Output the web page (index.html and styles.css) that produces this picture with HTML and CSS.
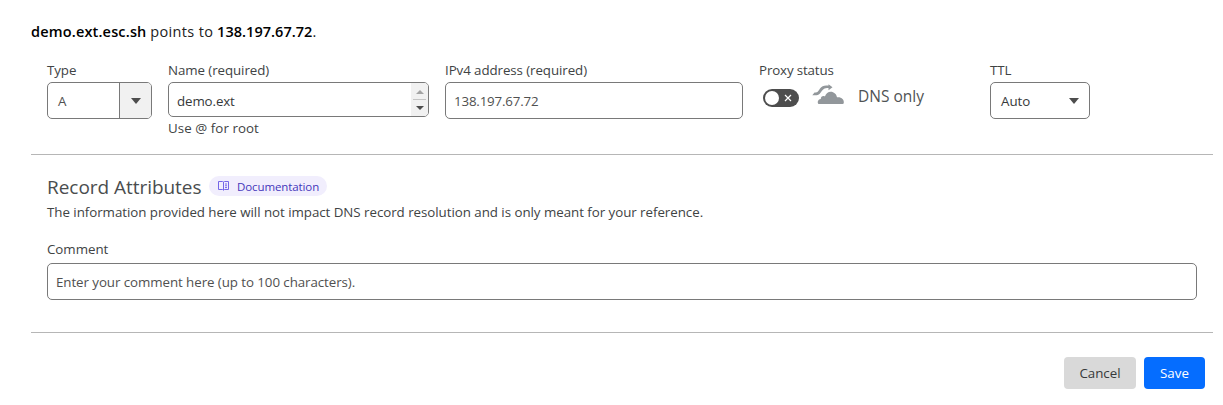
FILE: index.html
```html
<!DOCTYPE html>
<html lang="en">
<head>
<meta charset="utf-8">
<title>DNS record</title>
<link rel="stylesheet" href="styles.css">
</head>
<body>
<form class="record">
  <p class="summary"><strong class="host">demo.ext.esc.sh</strong> <span class="points">points to</span> <strong class="ip">138.197.67.72</strong>.</p>
  <div class="fields">
    <div class="field type">
      <label>Type</label>
      <div class="box combo"><span class="value">A</span><span class="toggle"><svg width="10" height="6" viewBox="0 0 10 6"><path d="M0 0h10L5 6z"/></svg></span></div>
    </div>
    <div class="field name">
      <label>Name (required)</label>
      <div class="box textarea"><span class="name-text">demo.ext</span><span class="scroll"><svg width="8" height="4" viewBox="0 0 8 4"><path class="dim" d="M0 4h8L4 0z"/></svg><i></i><svg width="8" height="4" viewBox="0 0 8 4"><path d="M0 0h8L4 4z"/></svg></span></div>
      <div class="hint">Use @ for root</div>
    </div>
    <div class="field address">
      <label>IPv4 address (required)</label>
      <div class="box"><span>138.197.67.72</span></div>
    </div>
    <div class="field proxy">
      <label>Proxy status</label>
      <div class="status">
        <span class="switch"><span class="knob"></span><svg width="8" height="8" viewBox="0 0 8 8"><path d="M1 1l6 6M7 1L1 7"/></svg></span>
        <svg class="cloud" width="33" height="21" viewBox="0 0 33 21"><path d="M6.5 20C5.2 18.8 5.5 15.5 8.8 15C8.6 12.6 11 11.4 12.9 12.4C14.2 8.7 17.5 6.8 21 8.2C23.5 9.2 24.6 11.1 25 13.3C29.5 12.8 32.3 15.5 31.8 19Q31.6 20 30.6 20Z"/><path d="M.3 11.2H4.5C8.2 11.2 9.3 6.8 11.5 5.2C12.9 4.1 14.5 4 16.5 4V6.2L20.5 3.2L16.5 .2V1.5C13.3 1.5 11 1.6 9.2 3.3C7.2 5.2 6.3 8.5 4 8.5H2.5Z"/></svg>
        <span class="dns">DNS only</span>
      </div>
    </div>
    <div class="field ttl">
      <label>TTL</label>
      <div class="box select"><span>Auto</span><svg width="10" height="6" viewBox="0 0 10 6"><path d="M0 0h10L5 6z"/></svg></div>
    </div>
  </div>
  <section class="attributes">
    <div class="heading"><h2>Record Attributes</h2>
      <a class="docs"><svg width="11" height="10" viewBox="0 0 11 10"><path d="M.5.5H4.5L5.5 1L6.5.5H10.5V8.5H6.5L5.5 9.2L4.5 8.5H.5ZM5.5 1V9M7 3H9M7 4.8H9M7 6.6H9"/></svg><span>Documentation</span></a>
    </div>
    <p>The information provided here will not impact DNS record resolution and is only meant for your reference.</p>
    <label>Comment</label>
    <div class="box comment"><span>Enter your comment here (up to 100 characters).</span></div>
  </section>
  <div class="actions"><button type="button" class="cancel">Cancel</button><button type="button" class="save">Save</button></div>
</form>
</body>
</html>
```
FILE: styles.css
```css
* { box-sizing: border-box; }
body { margin: 0; background: #fff; color: #404344; font: 13.33px/20px "Open Sans", "Noto Sans", sans-serif; }
p, h2 { margin: 0; font-weight: 400; }
svg { display: block; flex: none; fill: #4d4d4d; }
span { white-space: nowrap; }
.record { padding: 22px 10px 0 31px; }
.summary { height: 20px; font-size: 14.5px; color: #222; white-space: nowrap; }
.summary strong { font-weight: 600; color: #000; }
.host { letter-spacing: .17px; }
.points { letter-spacing: .35px; }
.ip { letter-spacing: .04px; }
.fields { display: flex; height: 113px; padding: 18px 16px 0; border-bottom: 1px solid #b6b6b6; }
label { display: block; height: 22px; letter-spacing: -.08px; white-space: nowrap; }
.type { width: 105px; margin-right: 16px; }
.name { width: 261px; margin-right: 16px; }
.address { width: 298px; margin-right: 16px; }
.address .box { letter-spacing: -.18px; }
.proxy { width: 231px; }
.proxy label { letter-spacing: -.14px; }
.ttl { width: 100px; }
.box { display: flex; align-items: center; height: 37px; padding: 0 8px; border: 1px solid #797979; border-radius: 5px; overflow: hidden; color: #505050; }
.combo { padding: 0; }
.value { flex: 1; padding-left: 10px; }
.toggle { display: flex; align-items: center; justify-content: center; width: 32px; height: 100%; border-left: 1px solid #797979; background: #f1f1f1; }
.textarea { height: 35px; padding-right: 0; color: #36393a; justify-content: space-between; }
.name-text { padding-top: 2px; letter-spacing: -.12px; }
.scroll { display: flex; flex-direction: column; align-items: center; width: 17px; height: 33px; padding-top: 7px; background: #f1f1f1; }
.scroll i { width: 13px; height: 1px; margin: 5px 0 6px; background: #c4c4c4; }
.dim { fill: #a3a3a3; }
.hint { padding-top: 1px; letter-spacing: .06px; }
.status { display: flex; padding-left: 4px; }
.switch { display: flex; align-items: center; width: 36px; height: 18px; margin-top: 7px; padding: 0 7px 0 2px; border-radius: 9px; background: #4d4d4d; justify-content: space-between; }
.knob { width: 14px; height: 14px; border-radius: 50%; background: #fff; }
.switch svg { fill: none; stroke: #fff; stroke-width: 1.2; }
.cloud { margin: 2px 13px 0 13px; fill: #92979b; }
.dns { padding-top: 4px; font-size: 15.5px; color: #505354; }
.select { padding: 0 10px; justify-content: space-between; color: #36393a; }
.attributes { height: 178px; padding: 21px 16px 0; border-bottom: 1px solid #b6b6b6; }
.heading { display: flex; height: 26px; }
h2 { width: 162px; font-size: 19px; line-height: 22px; letter-spacing: -.04px; color: #4a4d4e; white-space: nowrap; }
.docs { display: flex; align-items: center; width: 118px; height: 20px; padding-left: 9px; border-radius: 10px; background: #f1eefd; color: #4436bb; font-size: 11.5px; letter-spacing: -.1px; }
.docs svg { margin-right: 8px; fill: none; stroke: #7566e8; stroke-width: 1; }
.docs span { padding-top: 1px; }
.attributes p { height: 37px; letter-spacing: -.04px; }
.attributes label { height: 24px; letter-spacing: -.03px; }
.comment { letter-spacing: -.07px; }
.actions { display: flex; justify-content: flex-end; gap: 8px; padding: 24px 8px 0 0; }
button { height: 32px; padding: 0; border: 0; border-radius: 4px; font: 13.33px/20px "Open Sans", "Noto Sans", sans-serif; }
.cancel { width: 72px; background: #d9d9d9; color: #36393a; }
.save { width: 61px; background: #056dff; color: #fff; }
```
